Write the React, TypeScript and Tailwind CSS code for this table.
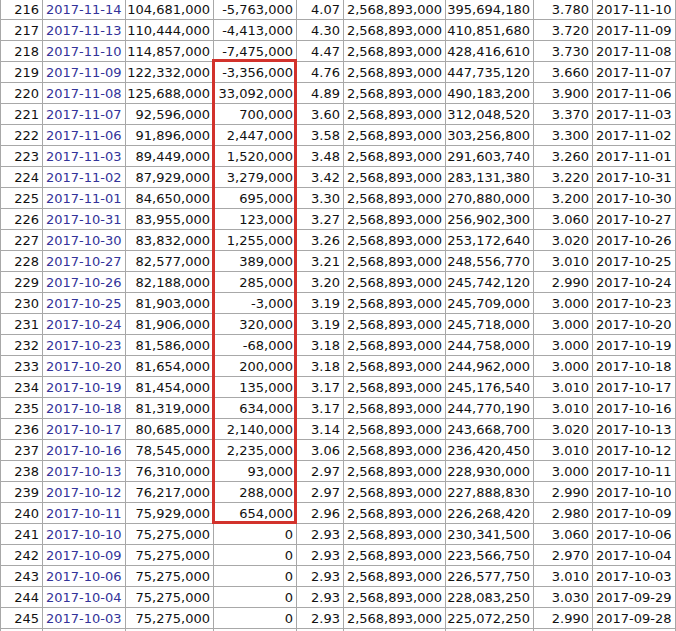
import React from "react";

type Row = [string, string, string, string, string, string, string, string];

const rows: Row[] = [
  ["216", "2017-11-14", "104,681,000", "-5,763,000", "4.07", "395,694,180", "3.780", "2017-11-10"],
  ["217", "2017-11-13", "110,444,000", "-4,413,000", "4.30", "410,851,680", "3.720", "2017-11-09"],
  ["218", "2017-11-10", "114,857,000", "-7,475,000", "4.47", "428,416,610", "3.730", "2017-11-08"],
  ["219", "2017-11-09", "122,332,000", "-3,356,000", "4.76", "447,735,120", "3.660", "2017-11-07"],
  ["220", "2017-11-08", "125,688,000", "33,092,000", "4.89", "490,183,200", "3.900", "2017-11-06"],
  ["221", "2017-11-07", "92,596,000", "700,000", "3.60", "312,048,520", "3.370", "2017-11-03"],
  ["222", "2017-11-06", "91,896,000", "2,447,000", "3.58", "303,256,800", "3.300", "2017-11-02"],
  ["223", "2017-11-03", "89,449,000", "1,520,000", "3.48", "291,603,740", "3.260", "2017-11-01"],
  ["224", "2017-11-02", "87,929,000", "3,279,000", "3.42", "283,131,380", "3.220", "2017-10-31"],
  ["225", "2017-11-01", "84,650,000", "695,000", "3.30", "270,880,000", "3.200", "2017-10-30"],
  ["226", "2017-10-31", "83,955,000", "123,000", "3.27", "256,902,300", "3.060", "2017-10-27"],
  ["227", "2017-10-30", "83,832,000", "1,255,000", "3.26", "253,172,640", "3.020", "2017-10-26"],
  ["228", "2017-10-27", "82,577,000", "389,000", "3.21", "248,556,770", "3.010", "2017-10-25"],
  ["229", "2017-10-26", "82,188,000", "285,000", "3.20", "245,742,120", "2.990", "2017-10-24"],
  ["230", "2017-10-25", "81,903,000", "-3,000", "3.19", "245,709,000", "3.000", "2017-10-23"],
  ["231", "2017-10-24", "81,906,000", "320,000", "3.19", "245,718,000", "3.000", "2017-10-20"],
  ["232", "2017-10-23", "81,586,000", "-68,000", "3.18", "244,758,000", "3.000", "2017-10-19"],
  ["233", "2017-10-20", "81,654,000", "200,000", "3.18", "244,962,000", "3.000", "2017-10-18"],
  ["234", "2017-10-19", "81,454,000", "135,000", "3.17", "245,176,540", "3.010", "2017-10-17"],
  ["235", "2017-10-18", "81,319,000", "634,000", "3.17", "244,770,190", "3.010", "2017-10-16"],
  ["236", "2017-10-17", "80,685,000", "2,140,000", "3.14", "243,668,700", "3.020", "2017-10-13"],
  ["237", "2017-10-16", "78,545,000", "2,235,000", "3.06", "236,420,450", "3.010", "2017-10-12"],
  ["238", "2017-10-13", "76,310,000", "93,000", "2.97", "228,930,000", "3.000", "2017-10-11"],
  ["239", "2017-10-12", "76,217,000", "288,000", "2.97", "227,888,830", "2.990", "2017-10-10"],
  ["240", "2017-10-11", "75,929,000", "654,000", "2.96", "226,268,420", "2.980", "2017-10-09"],
  ["241", "2017-10-10", "75,275,000", "0", "2.93", "230,341,500", "3.060", "2017-10-06"],
  ["242", "2017-10-09", "75,275,000", "0", "2.93", "223,566,750", "2.970", "2017-10-04"],
  ["243", "2017-10-06", "75,275,000", "0", "2.93", "226,577,750", "3.010", "2017-10-03"],
  ["244", "2017-10-04", "75,275,000", "0", "2.93", "228,083,250", "3.030", "2017-09-29"],
  ["245", "2017-10-03", "75,275,000", "0", "2.93", "225,072,250", "2.990", "2017-09-28"],
];

const cell = "h-full border-l border-[#a8a8a8] px-[3px] flex items-center whitespace-nowrap";

const TableRow = ({ r }: { r?: Row }) => (
  <div className="flex h-[21px] border-b border-[#a8a8a8]">
    <div className={`${cell} w-[42px] justify-end`}>{r?.[0]}</div>
    <div className={`${cell} w-[83px] justify-start text-[#333399]`}>{r?.[1]}</div>
    <div className={`${cell} w-[88px] justify-end`}>{r?.[2]}</div>
    <div className={`${cell} w-[83px] justify-end`}>{r?.[3]}</div>
    <div className={`${cell} w-[47px] justify-end`}>{r?.[4]}</div>
    <div className={`${cell} w-[102px] justify-end`}>{r ? "2,568,893,000" : ""}</div>
    <div className={`${cell} w-[88px] justify-end`}>{r?.[5]}</div>
    <div className={`${cell} w-[59px] justify-end`}>{r?.[6]}</div>
    <div className={`${cell} w-[84px] justify-start border-r`}>{r?.[7]}</div>
  </div>
);

export default function App() {
  return (
    <div
      className="relative h-[631px] w-[676px] overflow-hidden bg-white text-[13px] leading-none text-[#111]"
      style={{ fontFamily: '"DejaVu Sans", Verdana, sans-serif' }}
    >
      <div className="-mt-[2px] border-t border-[#a8a8a8]">
        {rows.map((r) => (
          <TableRow key={r[0]} r={r} />
        ))}
        <TableRow />
      </div>
      {/* red highlight box */}
      <div className="absolute left-[212px] top-[59px] h-[465px] w-[85px] border-[3px] border-[#d2322c]" />
    </div>
  );
}
